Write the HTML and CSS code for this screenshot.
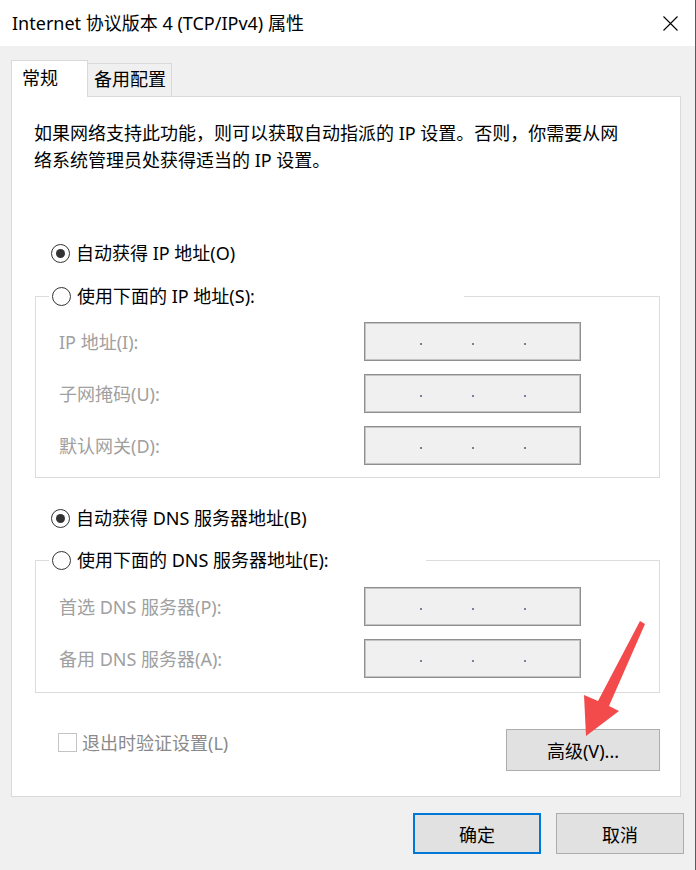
FILE: index.html
```html
<!DOCTYPE html>
<html lang="zh-CN">

<head>
    <meta charset="UTF-8">
    <meta name="viewport" content="width=device-width, initial-scale=1.0">
    <title>Internet 协议版本 4 (TCP/IPv4) 属性</title>
    <link rel="stylesheet" href="styles.css">
</head>

<body>
    <div class="window">
        <div class="titlebar">
            <span class="title">Internet 协议版本 4 (TCP/IPv4) 属性</span>
            <svg class="close" width="15" height="15" viewBox="0 0 15 15">
                <path d="M0.5 0.5 L14.5 14.5 M14.5 0.5 L0.5 14.5" stroke="#000" stroke-width="1.1" fill="none" />
            </svg>
        </div>

        <div class="content">
            <div class="tabs">
                <div class="tab tab-active">常规</div>
                <div class="tab">备用配置</div>
            </div>

            <div class="panel">
                <p class="desc">如果网络支持此功能，则可以获取自动指派的 IP 设置。否则，你需要从网<br>络系统管理员处获得适当的 IP 设置。</p>

                <div class="option option-first">
                    <span class="radio radio-checked"></span>
                    <span>自动获得 IP 地址(O)</span>
                </div>

                <fieldset class="group">
                    <legend class="option legend-ip">
                        <span class="radio"></span>
                        <span>使用下面的 IP 地址(S):</span>
                    </legend>
                    <div class="row">
                        <span class="label">IP 地址(I):</span>
                        <div class="ipbox"><i></i><i></i><i></i></div>
                    </div>
                    <div class="row">
                        <span class="label">子网掩码(U):</span>
                        <div class="ipbox"><i></i><i></i><i></i></div>
                    </div>
                    <div class="row">
                        <span class="label">默认网关(D):</span>
                        <div class="ipbox"><i></i><i></i><i></i></div>
                    </div>
                </fieldset>

                <div class="option option-dns">
                    <span class="radio radio-checked"></span>
                    <span>自动获得 DNS 服务器地址(B)</span>
                </div>

                <fieldset class="group group-dns">
                    <legend class="option legend-dns">
                        <span class="radio"></span>
                        <span>使用下面的 DNS 服务器地址(E):</span>
                    </legend>
                    <div class="row">
                        <span class="label">首选 DNS 服务器(P):</span>
                        <div class="ipbox"><i></i><i></i><i></i></div>
                    </div>
                    <div class="row">
                        <span class="label">备用 DNS 服务器(A):</span>
                        <div class="ipbox"><i></i><i></i><i></i></div>
                    </div>
                </fieldset>

                <div class="panel-bottom">
                    <label class="check">
                        <span class="checkbox"></span>
                        <span>退出时验证设置(L)</span>
                    </label>
                    <button class="btn btn-advanced">高级(V)...</button>
                </div>
            </div>

            <div class="footer">
                <button class="btn btn-default">确定</button>
                <button class="btn">取消</button>
            </div>
        </div>

        <!-- red annotation arrow pointing at the advanced button -->
        <svg class="arrow" width="696" height="870" viewBox="0 0 696 870">
            <polygon points="586,736 584,695 598,701 640,621 645,624 609,706 619,711" fill="#f34b4b" />
        </svg>
    </div>
</body>

</html>
```

FILE: styles.css
```css
* {
    margin: 0;
    padding: 0;
    box-sizing: border-box;
}

body {
    background-color: #f0f0f0;
    font-family: "Noto Sans", "Noto Sans CJK SC", sans-serif;
    font-size: 18px;
    color: #000;
}

.window {
    position: relative;
    width: 696px;
    height: 870px;
    background-color: #f0f0f0;
    border-right: 1px solid #5a5a5a;
    overflow: hidden;
}

.titlebar {
    height: 46px;
    background-color: #fff;
    display: flex;
    align-items: center;
    justify-content: space-between;
    padding: 0 17px 0 12px;
}

.title {
    font-size: 18px;
    line-height: 24px;
}

.close {
    display: block;
}

.content {
    padding: 14px 11px 0 11px;
}

.tabs {
    display: flex;
    align-items: flex-end;
    height: 36px;
}

.tab {
    height: 33px;
    width: 84px;
    padding: 0 6px;
    border: 1px solid #d9d9d9;
    border-bottom: none;
    border-left: none;
    background-color: #f0f0f0;
    line-height: 30px;
    white-space: nowrap;
}

.tab-active {
    height: 37px;
    width: 77px;
    margin-bottom: -1px;
    border-left: 1px solid #d9d9d9;
    background-color: #fff;
    padding-left: 10px;
    line-height: 34px;
    position: relative;
    z-index: 1;
}

.panel {
    width: 670px;
    height: 701px;
    background-color: #fff;
    border: 1px solid #d9d9d9;
    padding: 0 0 0 22px;
}

.desc {
    margin-top: 23px;
    line-height: 27px;
}

.option {
    display: flex;
    align-items: center;
    height: 24px;
    line-height: 24px;
    gap: 6px;
}

.option-first {
    margin-top: 67px;
    margin-left: 17px;
}

.option-dns {
    margin-top: 28px;
    margin-left: 17px;
}

.radio {
    width: 19px;
    height: 19px;
    border: 1px solid #333;
    border-radius: 50%;
    background-color: #fff;
    display: flex;
    align-items: center;
    justify-content: center;
    flex-shrink: 0;
}

.radio-checked::after {
    content: "";
    width: 9px;
    height: 9px;
    border-radius: 50%;
    background-color: #333;
}

.group {
    margin: 19px 0 0 1px;
    width: 625px;
    height: 194px;
    border: 1px solid #dcdcdc;
    padding: 0;
}

.group-dns {
    margin-top: 18px;
    height: 145px;
}

.group legend {
    margin-left: 13px;
    padding: 0 3px;
}

.legend-ip {
    width: 415px;
}

.legend-dns {
    width: 377px;
}

.row {
    display: flex;
    align-items: center;
    padding-left: 23px;
    margin-bottom: 13px;
}

.group .row:first-of-type {
    margin-top: 14px;
}

.group-dns .row:first-of-type {
    margin-top: 15px;
}

.label {
    width: 305px;
    color: #a0a0a0;
    line-height: 24px;
}

.ipbox {
    width: 217px;
    height: 39px;
    background-color: #f0f0f0;
    border: 1px solid #8f8f8f;
    box-shadow: inset 0 0 0 1px #c4c4c4;
    display: flex;
    justify-content: center;
    align-items: center;
    gap: 50px;
    padding-top: 4px;
}

.ipbox i {
    width: 2px;
    height: 2px;
    background-color: #7b7f9a;
}

.panel-bottom {
    display: flex;
    justify-content: space-between;
    align-items: flex-start;
    width: 625px;
    margin: 36px 0 0 1px;
}

.check {
    display: flex;
    align-items: center;
    gap: 5px;
    height: 24px;
    margin-top: 1px;
    padding-left: 23px;
    color: #8a8a8a;
}

.checkbox {
    width: 19px;
    height: 19px;
    border: 1px solid #c4c4c4;
    background-color: #fff;
}

.btn {
    width: 128px;
    height: 41px;
    background-color: #e1e1e1;
    border: 1px solid #adadad;
    font-family: "Noto Sans", "Noto Sans CJK SC", sans-serif;
    font-size: 18px;
    color: #000;
}

.btn-advanced {
    width: 154px;
    height: 42px;
}

.btn-default {
    border: 2px solid #0078d7;
}

.footer {
    display: flex;
    justify-content: flex-end;
    gap: 15px;
    margin-top: 16px;
}

.arrow {
    position: absolute;
    left: 0;
    top: 0;
    pointer-events: none;
}
```
